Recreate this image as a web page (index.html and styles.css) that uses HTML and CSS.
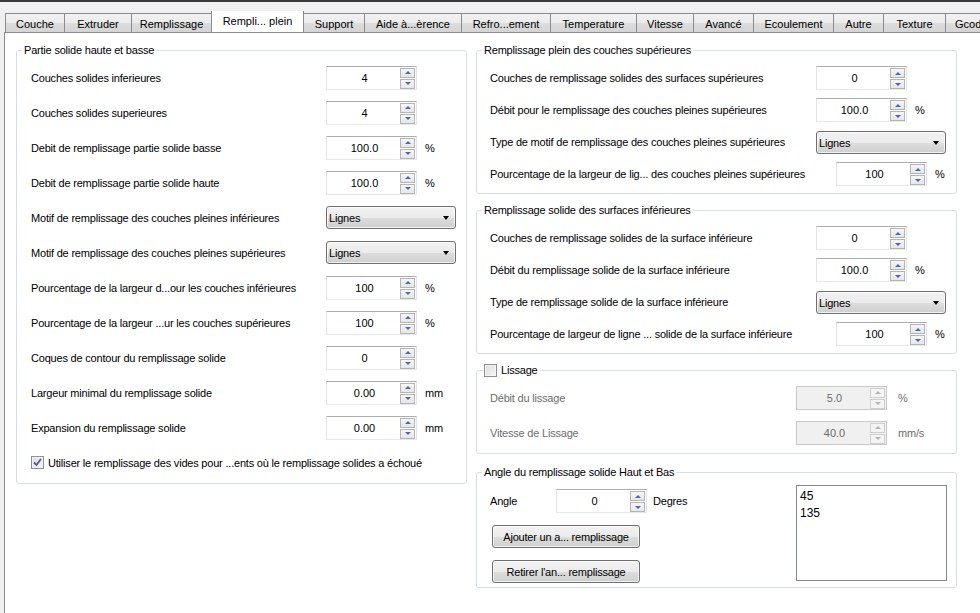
FILE: index.html
```html
<!DOCTYPE html>
<html lang="fr">
<head>
<meta charset="utf-8">
<title>Rempli... plein</title>
<link rel="stylesheet" href="styles.css">
</head>
<body>
<div class="window">
  <div class="tabs">
    <div class="tab w-couche">Couche</div>
    <div class="tab w-extruder">Extruder</div>
    <div class="tab w-rempl">Remplissage</div>
    <div class="tab tab-active w-plein">Rempli... plein</div>
    <div class="tab w-support">Support</div>
    <div class="tab w-aide">Aide à...èrence</div>
    <div class="tab w-refro">Refro...ement</div>
    <div class="tab w-temp">Temperature</div>
    <div class="tab w-vit">Vitesse</div>
    <div class="tab w-avance">Avancé</div>
    <div class="tab w-ecoul">Ecoulement</div>
    <div class="tab w-autre">Autre</div>
    <div class="tab w-texture">Texture</div>
    <div class="tab w-gcode">Gcode</div>
  </div>

  <div class="pane">
    <div class="col-left">
      <fieldset class="group">
        <legend class="legend">Partie solide haute et basse</legend>
        <div class="rows rows-left">
          <div class="row"><span class="lbl lbl-left">Couches solides inferieures</span><div class="spin"><span class="val">4</span><span class="btns"><span class="sb sb-up"></span><span class="sb sb-dn"></span></span></div></div>
          <div class="row"><span class="lbl lbl-left">Couches solides superieures</span><div class="spin"><span class="val">4</span><span class="btns"><span class="sb sb-up"></span><span class="sb sb-dn"></span></span></div></div>
          <div class="row"><span class="lbl lbl-left">Debit de remplissage partie solide basse</span><div class="spin"><span class="val">100.0</span><span class="btns"><span class="sb sb-up"></span><span class="sb sb-dn"></span></span></div><span class="unit">%</span></div>
          <div class="row"><span class="lbl lbl-left">Debit de remplissage partie solide haute</span><div class="spin"><span class="val">100.0</span><span class="btns"><span class="sb sb-up"></span><span class="sb sb-dn"></span></span></div><span class="unit">%</span></div>
          <div class="row"><span class="lbl lbl-left">Motif de remplissage des couches pleines inférieures</span><div class="combo"><span class="combo-text">Lignes</span><span class="combo-arrow"></span></div></div>
          <div class="row"><span class="lbl lbl-left">Motif de remplissage des couches pleines supérieures</span><div class="combo"><span class="combo-text">Lignes</span><span class="combo-arrow"></span></div></div>
          <div class="row"><span class="lbl lbl-left">Pourcentage de la largeur d...our les couches inférieures</span><div class="spin"><span class="val">100</span><span class="btns"><span class="sb sb-up"></span><span class="sb sb-dn"></span></span></div><span class="unit">%</span></div>
          <div class="row"><span class="lbl lbl-left">Pourcentage de la largeur ...ur les couches supérieures</span><div class="spin"><span class="val">100</span><span class="btns"><span class="sb sb-up"></span><span class="sb sb-dn"></span></span></div><span class="unit">%</span></div>
          <div class="row"><span class="lbl lbl-left">Coques de contour du remplissage solide</span><div class="spin"><span class="val">0</span><span class="btns"><span class="sb sb-up"></span><span class="sb sb-dn"></span></span></div></div>
          <div class="row"><span class="lbl lbl-left">Largeur minimal du remplissage solide</span><div class="spin"><span class="val">0.00</span><span class="btns"><span class="sb sb-up"></span><span class="sb sb-dn"></span></span></div><span class="unit">mm</span></div>
          <div class="row"><span class="lbl lbl-left">Expansion du remplissage solide</span><div class="spin"><span class="val">0.00</span><span class="btns"><span class="sb sb-up"></span><span class="sb sb-dn"></span></span></div><span class="unit">mm</span></div>
          <div class="row">
            <span class="check checked"><svg width="9" height="9" viewBox="0 0 9 9"><path d="M1 4.5 L3.5 7 L8 1" fill="none" stroke="#4a5f97" stroke-width="1.8"/></svg></span>
            <span class="check-label">Utiliser le remplissage des vides pour ...ents où le remplissage solides a échoué</span>
          </div>
        </div>
      </fieldset>
    </div>

    <div class="col-right">
      <fieldset class="group">
        <legend class="legend">Remplissage plein des couches supérieures</legend>
        <div class="rows rows-right">
          <div class="row"><span class="lbl lbl-right">Couches de remplissage solides des surfaces supérieures</span><div class="spin"><span class="val">0</span><span class="btns"><span class="sb sb-up"></span><span class="sb sb-dn"></span></span></div></div>
          <div class="row"><span class="lbl lbl-right">Débit pour le remplissage des couches pleines supérieures</span><div class="spin"><span class="val">100.0</span><span class="btns"><span class="sb sb-up"></span><span class="sb sb-dn"></span></span></div><span class="unit">%</span></div>
          <div class="row"><span class="lbl lbl-right">Type de motif de remplissage des couches pleines supérieures</span><div class="combo"><span class="combo-text">Lignes</span><span class="combo-arrow"></span></div></div>
          <div class="row"><span class="lbl lbl-right-wide">Pourcentage de la largeur de lig... des couches pleines supérieures</span><div class="spin"><span class="val">100</span><span class="btns"><span class="sb sb-up"></span><span class="sb sb-dn"></span></span></div><span class="unit">%</span></div>
        </div>
      </fieldset>

      <fieldset class="group">
        <legend class="legend">Remplissage solide des surfaces inférieures</legend>
        <div class="rows rows-right">
          <div class="row"><span class="lbl lbl-right">Couches de remplissage solides de la surface inférieure</span><div class="spin"><span class="val">0</span><span class="btns"><span class="sb sb-up"></span><span class="sb sb-dn"></span></span></div></div>
          <div class="row"><span class="lbl lbl-right">Débit du remplissage solide de la surface inférieure</span><div class="spin"><span class="val">100.0</span><span class="btns"><span class="sb sb-up"></span><span class="sb sb-dn"></span></span></div><span class="unit">%</span></div>
          <div class="row"><span class="lbl lbl-right">Type de remplissage solide de la surface inférieure</span><div class="combo"><span class="combo-text">Lignes</span><span class="combo-arrow"></span></div></div>
          <div class="row"><span class="lbl lbl-right-wide">Pourcentage de largeur de ligne ... solide de la surface inférieure</span><div class="spin"><span class="val">100</span><span class="btns"><span class="sb sb-up"></span><span class="sb sb-dn"></span></span></div><span class="unit">%</span></div>
        </div>
      </fieldset>

      <fieldset class="group">
        <legend class="legend legend-check"><span class="check"></span><span>Lissage</span></legend>
        <div class="rows rows-lis">
          <div class="row"><span class="lbl lbl-lis disabled">Débit du lissage</span><div class="spin spin-disabled"><span class="val">5.0</span><span class="btns"><span class="sb sb-up"></span><span class="sb sb-dn"></span></span></div><span class="unit unit-lis disabled-unit">%</span></div>
          <div class="row"><span class="lbl lbl-lis disabled">Vitesse de Lissage</span><div class="spin spin-disabled"><span class="val">40.0</span><span class="btns"><span class="sb sb-up"></span><span class="sb sb-dn"></span></span></div><span class="unit unit-lis disabled-unit">mm/s</span></div>
        </div>
      </fieldset>

      <fieldset class="group group-angle">
        <legend class="legend">Angle du remplissage solide Haut et Bas</legend>
        <div class="angle-body">
          <div class="angle-left">
            <div class="angle-row"><span class="lbl lbl-angle">Angle</span><div class="spin"><span class="val">0</span><span class="btns"><span class="sb sb-up"></span><span class="sb sb-dn"></span></span></div><span class="unit">Degres</span></div>
            <div class="button">Ajouter un a... remplissage</div>
            <div class="button">Retirer l'an... remplissage</div>
          </div>
          <div class="listbox">
            <div class="list-item">45</div>
            <div class="list-item">135</div>
          </div>
        </div>
      </fieldset>
    </div>
  </div>
</div>
</body>
</html>
```

FILE: styles.css
```css
* { box-sizing: border-box; }

html, body {
  margin: 0;
  padding: 0;
  height: 100%;
  overflow: hidden;
}

body {
  background: #f0f0f0;
  font-family: "Liberation Sans", Arial, sans-serif;
  font-size: 11px;
  letter-spacing: -0.2px;
  color: #000;
}

.window {
  height: 613px;
  display: flex;
  flex-direction: column;
  border-top: 2px solid #3a3a3a;
  padding-top: 9px;
}

/* ---------- tabs ---------- */
.tabs {
  display: flex;
  align-items: flex-end;
  height: 21px;
  padding-left: 5px;
  position: relative;
  z-index: 2;
  overflow: hidden;
}

.tab {
  height: 19px;
  border: 1px solid #898c95;
  border-bottom: none;
  border-right: none;
  background: linear-gradient(#f2f2f2, #ebebeb 50%, #dddddd 51%, #d4d4d4);
  display: flex;
  align-items: center;
  justify-content: center;
  white-space: nowrap;
  padding-top: 1px;
  flex: none;
  letter-spacing: 0;
}
.tab-active {
  background: #fff;
  border-right: 1px solid #898c95;
  padding-bottom: 3px;
  margin-bottom: -1px;
  height: 23px;
}
.tab-active + .tab { border-left: none; }

.w-couche { width: 59px; }
.w-extruder { width: 67px; }
.w-rempl { width: 80px; }
.w-plein { width: 93px; }
.w-support { width: 60px; }
.w-aide { width: 97px; }
.w-refro { width: 89px; }
.w-temp { width: 86px; }
.w-vit { width: 57px; }
.w-avance { width: 60px; }
.w-ecoul { width: 80px; }
.w-autre { width: 50px; }
.w-texture { width: 62px; }
.w-gcode { width: 60px; justify-content: flex-start; padding-left: 9px; }

/* ---------- pane ---------- */
.pane {
  flex: 1;
  margin-left: 4px;
  background: #fff;
  border-left: 1px solid #898c95;
  border-top: 1px solid #898c95;
  padding: 11px 0 0 11px;
  display: flex;
  align-items: flex-start;
  gap: 9px;
}

.col-left { width: 451px; flex: none; }
.col-right { width: 481px; flex: none; display: flex; flex-direction: column; gap: 10px; }

.group {
  margin: 0;
  padding: 0 0 3px 0;
  border: 1px solid #d5dfe5;
  border-radius: 3px;
  min-width: 0;
}
.group-angle { margin-top: 2px; }

.legend {
  margin-left: 5px;
  padding: 0 2px;
  line-height: 13px;
  height: 13px;
  display: flex;
  align-items: center;
  gap: 4px;
}
.legend-check { padding-left: 1px; margin-left: 6px; }

.rows { display: flex; flex-direction: column; }
.rows-left { padding: 3px 0 0 14px; }
.rows-left .row { height: 35px; }
.rows-right { padding: 5px 0 0 13px; }
.rows-right .row { height: 32px; }
.rows-lis { padding: 3px 0 0 13px; }
.rows-lis .row { height: 35px; }

.row {
  display: flex;
  align-items: center;
  white-space: nowrap;
}

.lbl { flex: none; overflow: hidden; }
.lbl-left { width: 295px; }
.lbl-right { width: 326px; }
.lbl-right-wide { width: 346px; }
.lbl-lis { width: 306px; }
.lbl-angle { width: 66px; }
.disabled { color: #6d6d6d; }
.disabled-unit { color: #6d6d6d; }

.unit { margin-left: 8px; }
.unit-lis { margin-left: 11px; }

/* ---------- spin box ---------- */
.spin {
  width: 91px;
  height: 24px;
  flex: none;
  display: flex;
  background: #fff;
  border: 1px solid #e2e3ea;
  border-top-color: #abadb3;
  border-bottom-color: #e3e9ef;
}
.spin .val {
  flex: 1;
  text-align: center;
  line-height: 22px;
  padding-left: 2px;
  letter-spacing: 0;
}
.btns {
  width: 15px;
  margin: 1px 1px 0 0;
  display: flex;
  flex-direction: column;
}
.sb {
  height: 10px;
  border: 1px solid #b5b5b5;
  background: linear-gradient(#f6f6f6, #e6e6e6);
  display: flex;
  align-items: center;
  justify-content: center;
}
.sb-dn { margin-top: 1px; }
.sb-up::after {
  content: "";
  border-left: 3.5px solid transparent;
  border-right: 3.5px solid transparent;
  border-bottom: 3px solid #4d68b0;
}
.sb-dn::after {
  content: "";
  border-left: 3.5px solid transparent;
  border-right: 3.5px solid transparent;
  border-top: 3px solid #4d68b0;
}
.spin-disabled { background: #f0f0f0; color: #6d6d6d; border-color: #c9c9c9; }
.spin-disabled .sb { border-color: #cfcfcf; background: #f4f4f4; }
.spin-disabled .sb-up::after { border-bottom-color: #b4b4b4; }
.spin-disabled .sb-dn::after { border-top-color: #b4b4b4; }

/* ---------- combo ---------- */
.combo {
  width: 130px;
  height: 23px;
  flex: none;
  border: 1px solid #707070;
  border-radius: 3px;
  background: linear-gradient(#f2f2f2, #ebebeb 50%, #dddddd 51%, #cfcfcf);
  display: flex;
  align-items: center;
  justify-content: space-between;
  padding: 1px 6px 0 2px;
  box-shadow: inset 0 0 0 1px rgba(255,255,255,0.7);
}
.combo-arrow {
  border-left: 3.5px solid transparent;
  border-right: 3.5px solid transparent;
  border-top: 4px solid #000;
}

/* ---------- checkbox ---------- */
.check {
  width: 13px;
  height: 13px;
  flex: none;
  border: 1px solid #8e8f8f;
  background: linear-gradient(135deg, #dcdcdc, #f6f6f6);
  box-shadow: inset 0 0 0 1px #f4f4f4;
  display: flex;
  align-items: center;
  justify-content: center;
}
.check-label { margin-left: 4px; }

/* ---------- angle group ---------- */
.angle-body {
  display: flex;
  padding: 0 0 1px 13px;
}
.angle-left {
  width: 306px;
  flex: none;
  display: flex;
  flex-direction: column;
  align-items: flex-start;
}
.angle-row {
  display: flex;
  align-items: center;
  margin-top: 10px;
}
.angle-row .unit { margin-left: 6px; }
.button {
  width: 148px;
  height: 23px;
  margin-left: 2px;
  margin-top: 12px;
  border: 1px solid #707070;
  border-radius: 3px;
  background: linear-gradient(#f2f2f2, #ebebeb 50%, #dddddd 51%, #cfcfcf);
  box-shadow: inset 0 0 0 1px rgba(255,255,255,0.7);
  display: flex;
  align-items: center;
  justify-content: center;
}
.button + .button { margin-top: 12px; }

.listbox {
  width: 151px;
  height: 96px;
  margin-top: 6px;
  border: 1px solid #828790;
  background: #fff;
  padding: 2px 3px;
  font-size: 12px;
  letter-spacing: 0;
}
.list-item { line-height: 17px; }
```
